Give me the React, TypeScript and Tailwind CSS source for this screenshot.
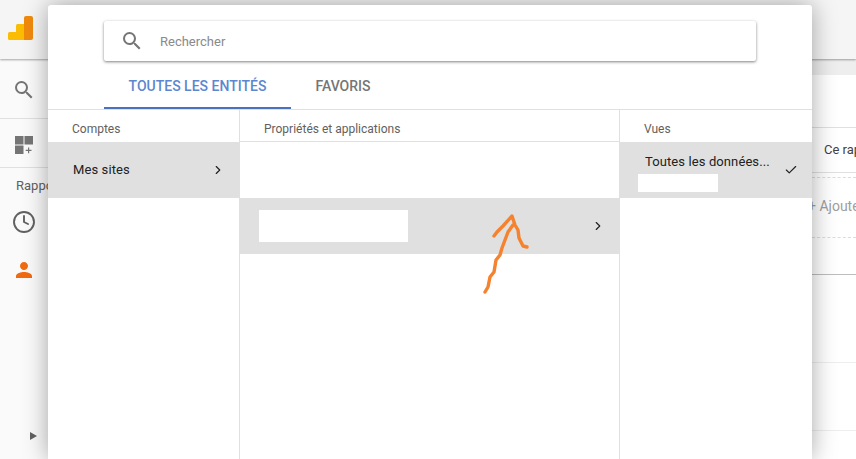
import { Check, ChevronRight, Clock } from "lucide-react";

function SearchIcon() {
	return (
		<svg width="24" height="24" viewBox="0 0 24 24" fill="#757575" className="shrink-0">
			<path d="M15.5 14h-.79l-.28-.27A6.471 6.471 0 0 0 16 9.5 6.5 6.5 0 1 0 9.5 16c1.61 0 3.09-.59 4.23-1.57l.27.28v.79l5 4.99L20.49 19l-4.99-5zm-6 0C7.01 14 5 11.99 5 9.5S7.01 5 9.5 5 14 7.01 14 9.5 11.99 14 9.5 14z" />
		</svg>
	);
}

function PersonIcon() {
	return (
		<svg width="24" height="24" viewBox="0 0 24 24" fill="#f26a0f">
			<path d="M12 12c2.21 0 4-1.79 4-4s-1.79-4-4-4-4 1.79-4 4 1.79 4 4 4zm0 2c-2.67 0-8 1.34-8 4v2h16v-2c0-2.66-5.33-4-8-4z" />
		</svg>
	);
}

function Logo() {
	return (
		<svg width="26" height="26" viewBox="0 0 26 26">
			<rect x="0" y="17" width="12" height="8" rx="1.5" fill="#fbbc04" />
			<rect x="8" y="9" width="10" height="16" rx="1.5" fill="#fbbc04" />
			<path d="M16 3a2 2 0 0 1 2-2h5a2 2 0 0 1 2 2v20a2 2 0 0 1-2 2h-7z" fill="#f08a0c" />
		</svg>
	);
}

function GridPlus() {
	return (
		<svg width="20" height="20" viewBox="0 0 20 20" fill="#757575">
			<rect x="1" y="1" width="8.5" height="8.5" />
			<rect x="10.5" y="1" width="8.5" height="8.5" />
			<rect x="1" y="10.5" width="8.5" height="8.5" />
			<path d="M14 12.5h1.2v2.3h2.3V16h-2.3v2.3H14V16h-2.3v-1.2H14z" />
		</svg>
	);
}

function Arrow() {
	return (
		<svg
			className="absolute top-[210px] left-[480px] z-30"
			width="50"
			height="90"
			viewBox="0 0 50 90"
			fill="none"
			stroke="#f5822e"
			strokeWidth="3.4"
			strokeLinecap="round"
			strokeLinejoin="round"
		>
			<path d="M14 26L17 22L23 16L32 6L35 15L38 20L39 28L43 36L47 37" />
			<path d="M33 15L28 22L25 30L22 38L20 45L16 50L14 62L10 67L8 77L5 82" />
		</svg>
	);
}

function Background() {
	return (
		<div className="flex h-full flex-col bg-white">
			<div className="relative z-10 h-[59px] shrink-0 bg-[#f5f5f5] pt-[15px] pl-[8px] shadow-[0_1px_2px_rgba(0,0,0,0.35)]">
				<Logo />
			</div>
			<div className="flex flex-1">
				<div className="relative flex w-[48px] shrink-0 flex-col bg-[#fafafa]">
					<div className="h-[60px] border-b border-[#e0e0e0] pt-[19px] pl-[12px]">
						<SearchIcon />
					</div>
					<div className="h-[49px] border-b border-[#e0e0e0] pt-[16px] pl-[14px]">
						<GridPlus />
					</div>
					<div className="pt-[10px] pl-[16px] text-[13px] leading-4 whitespace-nowrap text-[#616161]">
						Rapports
					</div>
					<div className="pt-[16px] pl-[12px]">
						<Clock size={24} color="#616161" strokeWidth={1.9} />
					</div>
					<div className="pt-[24px] pl-[12px]">
						<PersonIcon />
					</div>
					<div className="absolute top-[373px] left-[30px] h-0 w-0 border-y-[4px] border-l-[7px] border-y-transparent border-l-[#616161]" />
				</div>
				<div className="ml-[764px] flex-1 overflow-hidden whitespace-nowrap text-[#424242]">
					<div className="h-[16px] bg-[#eeeeee]" />
					<div className="h-[53px] border-b border-[#e0e0e0]" />
					<div className="flex h-[45px] items-center border-b border-[#e0e0e0] pl-[12px] text-[13px]">
						Ce rapport
					</div>
					<div className="mt-[4px] flex h-[61px] items-center border-y border-dashed border-[#dcdcdc] pb-[3px] text-[14px] text-[#9e9e9e]">
						<span className="-ml-[4px]">+ Ajouter</span>
					</div>
					<div className="h-[37px] border-b border-[#bdbdbd]" />
					<div className="h-[88px] border-b border-[#eeeeee]" />
					<div className="h-[68px] border-b border-[#eeeeee]" />
				</div>
			</div>
		</div>
	);
}

export default function App() {
	return (
		<div className="relative h-[459px] w-[856px] overflow-hidden font-['Roboto',sans-serif]">
			<Background />
			<div className="absolute top-[5px] bottom-0 left-[48px] z-20 flex w-[764px] flex-col rounded-t-[3px] bg-white shadow-[0_0_24px_rgba(0,0,0,0.35)]">
				<div className="mx-[56px] mt-[16px] flex h-[40px] shrink-0 items-center rounded-[2px] bg-white pl-[16px] shadow-[0_1px_3px_rgba(0,0,0,0.5)]">
					<SearchIcon />
					<span className="ml-[16px] pt-px text-[13px] text-[#8a8a8a]">Rechercher</span>
				</div>
				<div className="mt-[5px] ml-[56px] flex h-[43px] shrink-0 text-[14px] font-medium">
					<div className="flex w-[187px] items-center justify-center border-b-2 border-[#4a72c0] text-[#5c87cf]">
						TOUTES LES ENTITÉS
					</div>
					<div className="flex w-[104px] items-center justify-center pb-[2px] text-[#757575]">
						FAVORIS
					</div>
				</div>
				<div className="flex min-h-0 flex-1 border-t border-[#e0e0e0]">
					<div className="w-[192px] shrink-0 border-r border-[#e0e0e0]">
						<div className="flex h-[32px] items-center pt-[6px] pl-[24px] text-[12px] text-[#616161]">
							Comptes
						</div>
						<div className="flex h-[56px] items-center justify-between bg-[#e0e0e0] pr-[14px] pl-[25px] text-[13px] font-[450] tracking-[0.1px] text-[#212121]">
							Mes sites
							<ChevronRight size={14} color="#212121" strokeWidth={2} />
						</div>
					</div>
					<div className="w-[380px] shrink-0 border-r border-[#e0e0e0]">
						<div className="flex h-[32px] items-center border-b border-[#e0e0e0] pt-[6px] pl-[24px] text-[12px] text-[#616161]">
							Propriétés et applications
						</div>
						<div className="h-[56px]" />
						<div className="flex h-[56px] items-center justify-between bg-[#e0e0e0] pr-[14px] pl-[19px]">
							<div className="h-[32px] w-[149px] bg-white" />
							<ChevronRight size={14} color="#212121" strokeWidth={2} />
						</div>
					</div>
					<div className="flex-1">
						<div className="flex h-[32px] items-center pt-[6px] pl-[24px] text-[12px] text-[#616161]">
							Vues
						</div>
						<div className="relative h-[56px] bg-[#e0e0e0] pt-[12px] pl-[25px] text-[13px] leading-4 font-[450] tracking-[0.1px] text-[#212121]">
							Toutes les données...
							<div className="mt-[4px] ml-[-7px] h-[18px] w-[80px] bg-white" />
							<Check size={14} color="#212121" strokeWidth={2} className="absolute top-[21px] right-[14px]" />
						</div>
					</div>
				</div>
			</div>
			<Arrow />
		</div>
	);
}
